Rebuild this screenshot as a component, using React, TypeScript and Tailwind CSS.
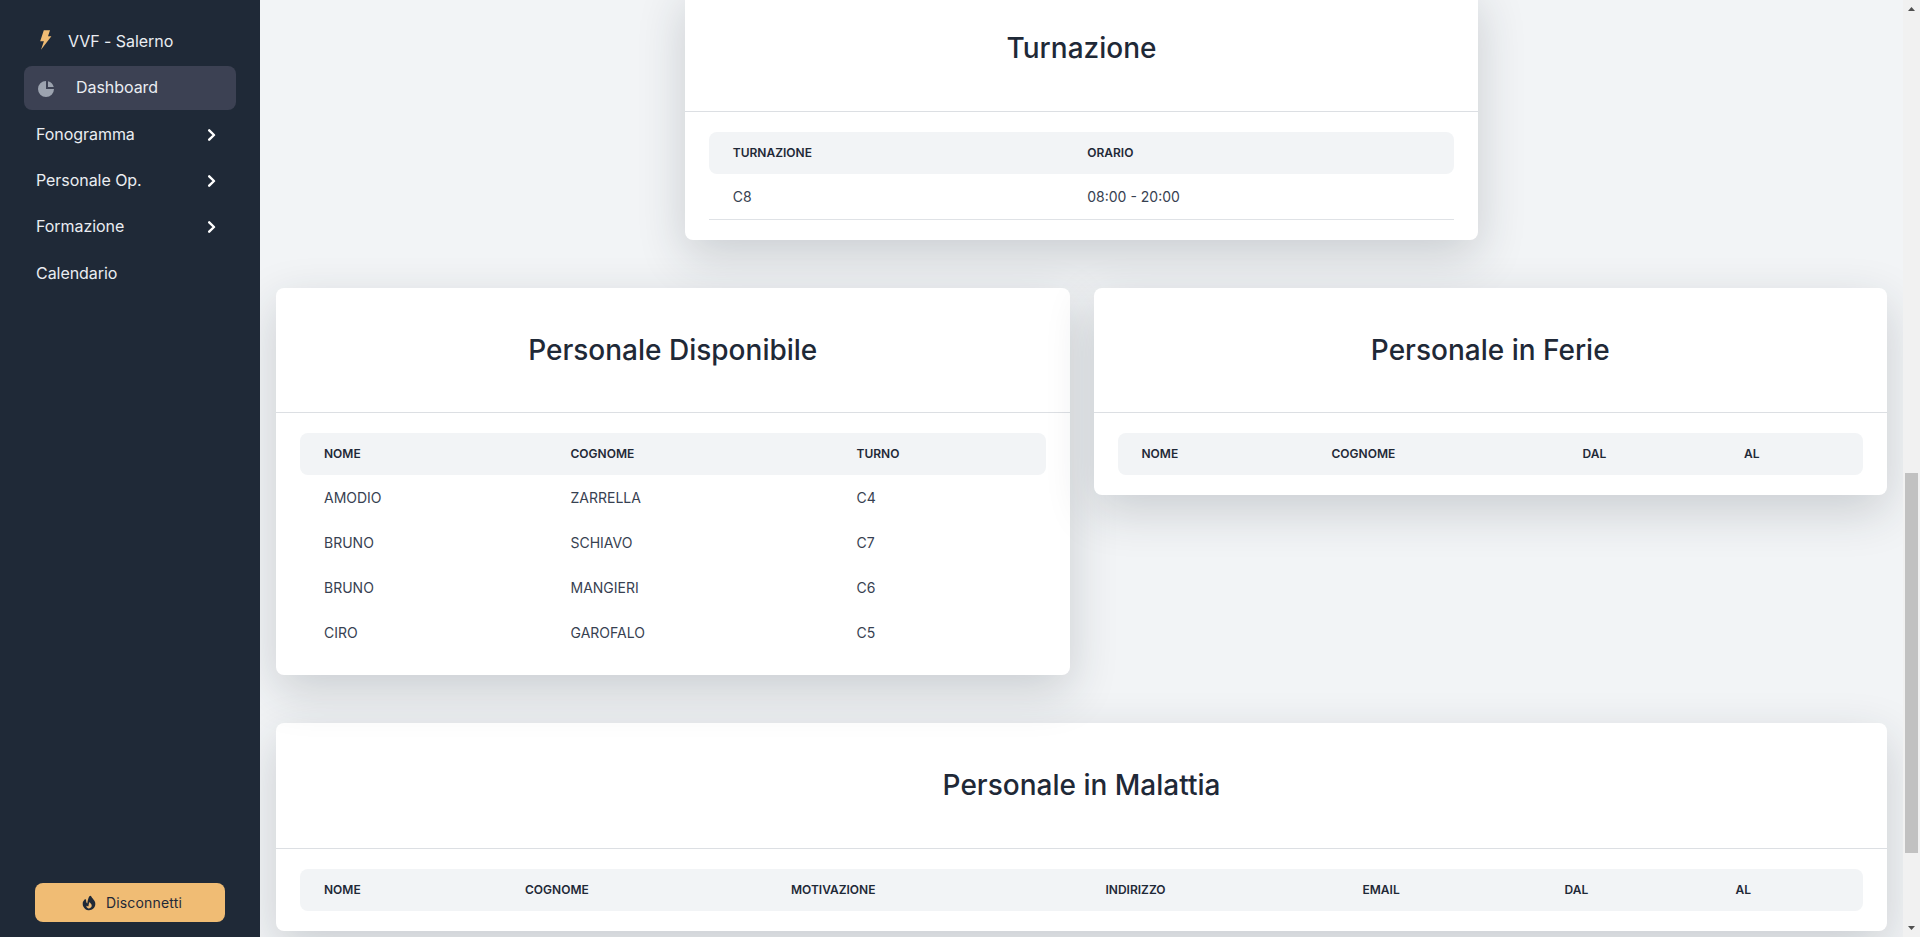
import React from "react";
import { HiChartPie, HiFire } from "react-icons/hi";

type Column = { label: string; width: string };

type CardProps = {
  title: string;
  columns: Column[];
  rows?: string[][];
  bordered?: boolean;
  className?: string;
  headerClass?: string;
};

function TableCard({
  title,
  columns,
  rows = [],
  bordered = false,
  className = "",
  headerClass = "h-[125px]",
}: CardProps) {
  return (
    <section
      className={`rounded-lg bg-white pb-5 shadow-[0_16px_48px_rgba(31,41,55,0.19)] ${className}`}
    >
      <header
        className={`flex items-center justify-center border-b border-[#dcdfe3] ${headerClass}`}
      >
        <h2 className="text-[28px] leading-9 font-medium text-[#1f2937]">{title}</h2>
      </header>
      <div className="px-6 pt-5">
        <table className="w-full table-fixed border-separate border-spacing-0 text-left">
          <colgroup>
            {columns.map((c) => (
              <col key={c.label} className={c.width} />
            ))}
          </colgroup>
          <thead>
            <tr className="h-[42px]">
              {columns.map((c) => (
                <th
                  key={c.label}
                  className="bg-[#f2f4f6] px-6 text-xs font-semibold text-[#1f2937] uppercase first:rounded-l-lg last:rounded-r-lg"
                >
                  {c.label}
                </th>
              ))}
            </tr>
          </thead>
          <tbody>
            {rows.map((row, i) => (
              <tr key={i} className={bordered ? "h-[46px]" : "h-[45px]"}>
                {row.map((cell, j) => (
                  <td
                    key={j}
                    className={`px-6 text-sm text-[#374151] ${
                      bordered ? "border-b border-[#dfe2e6]" : ""
                    }`}
                  >
                    {cell}
                  </td>
                ))}
              </tr>
            ))}
          </tbody>
        </table>
      </div>
    </section>
  );
}

function Bolt() {
  return (
    <svg viewBox="0 0 12 20" className="-mt-[3px] h-5 w-3" fill="#f0bc74">
      <path d="M3.8 0.2H10L8 6.3H11.4L1 19.8 3.9 11.3H0.2z" />
    </svg>
  );
}

function Chevron() {
  return (
    <svg
      viewBox="0 0 10 12"
      className="mt-px h-3 w-2.5"
      fill="none"
      stroke="#ffffff"
      strokeWidth="2.4"
      strokeLinecap="round"
      strokeLinejoin="round"
    >
      <path d="M2.2 1.3 7 6 2.2 10.7" />
    </svg>
  );
}

function Sidebar() {
  return (
    <nav className="flex w-[260px] shrink-0 flex-col bg-[#1f2937] px-6 pt-[18px] text-base tracking-[-0.05px] text-[#eaedf2]">
      <div className="flex h-[46px] items-center pl-4">
        <Bolt />
        <span className="ml-4">VVF - Salerno</span>
      </div>
      <div className="mt-0.5 flex h-11 items-center rounded-lg bg-[#3c4153] pl-3">
        <HiChartPie className="mt-0.5 h-5 w-5 text-[#9ca3af]" />
        <span className="-mt-0.5 ml-5">Dashboard</span>
      </div>
      <ul className="mt-px">
        {["Fonogramma", "Personale Op.", "Formazione"].map((label) => (
          <li key={label} className="flex h-[46px] items-center justify-between pr-[19px] pl-3">
            <span>{label}</span>
            <Chevron />
          </li>
        ))}
        <li className="flex h-[47px] items-center pl-3">Calendario</li>
      </ul>
      <button className="mt-auto mb-[15px] ml-[11px] flex h-[39px] w-[190px] items-center justify-center rounded-lg bg-[#f0bc74] pl-0.5 text-sm tracking-[0.18px] text-[#1f2937]">
        <HiFire className="mr-2 h-[18px] w-[18px]" />
        Disconnetti
      </button>
    </nav>
  );
}

function Scrollbar() {
  return (
    <div className="flex w-[17px] shrink-0 flex-col items-center bg-[#f1f1f1]">
      <svg viewBox="0 0 17 17" className="h-[17px] w-[17px]" fill="#505050">
        <path d="M5 11h7L8.5 7z" />
      </svg>
      <div className="mt-[456px] h-[380px] w-[13px] bg-[#c1c1c1]" />
      <svg viewBox="0 0 17 17" className="mt-auto h-[17px] w-[17px]" fill="#505050">
        <path d="M5 6h7l-3.5 4z" />
      </svg>
    </div>
  );
}

export default function App() {
  return (
    <div className="flex h-[937px] w-[1920px] overflow-hidden bg-[#f2f4f6] font-['Inter',sans-serif]">
      <Sidebar />
      <main className="min-w-0 flex-1 overflow-hidden px-4">
        <TableCard
          title="Turnazione"
          className="mx-auto -mt-[13px] w-[793.5px]"
          headerClass="h-[125px] pb-0.5"
          bordered
          columns={[
            { label: "Turnazione", width: "w-[354.5px]" },
            { label: "Orario", width: "w-auto" },
          ]}
          rows={[["C8", "08:00 - 20:00"]]}
        />
        <div className="mt-12 grid grid-cols-2 items-start gap-6">
          <TableCard
            title="Personale Disponibile"
            columns={[
              { label: "Nome", width: "w-[246.5px]" },
              { label: "Cognome", width: "w-[286px]" },
              { label: "Turno", width: "w-auto" },
            ]}
            rows={[
              ["AMODIO", "ZARRELLA", "C4"],
              ["BRUNO", "SCHIAVO", "C7"],
              ["BRUNO", "MANGIERI", "C6"],
              ["CIRO", "GAROFALO", "C5"],
            ]}
          />
          <TableCard
            title="Personale in Ferie"
            columns={[
              { label: "Nome", width: "w-[190px]" },
              { label: "Cognome", width: "w-[251px]" },
              { label: "Dal", width: "w-[161.5px]" },
              { label: "Al", width: "w-auto" },
            ]}
          />
        </div>
        <TableCard
          title="Personale in Malattia"
          className="mt-12"
          headerClass="h-[126px] pb-0.5"
          columns={[
            { label: "Nome", width: "w-[201px]" },
            { label: "Cognome", width: "w-[266px]" },
            { label: "Motivazione", width: "w-[314.5px]" },
            { label: "Indirizzo", width: "w-[257px]" },
            { label: "Email", width: "w-[202px]" },
            { label: "Dal", width: "w-[171px]" },
            { label: "Al", width: "w-auto" },
          ]}
        />
      </main>
      <Scrollbar />
    </div>
  );
}
